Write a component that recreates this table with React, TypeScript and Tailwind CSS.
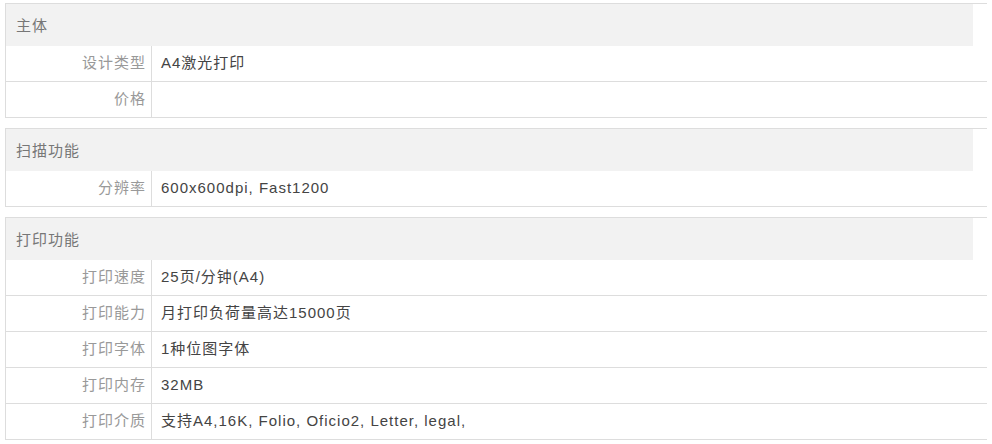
const sections: { title: string; rows: [string, string][] }[] = [
  {
    title: "主体",
    rows: [
      ["设计类型", "A4激光打印"],
      ["价格", ""],
    ],
  },
  {
    title: "扫描功能",
    rows: [["分辨率", "600x600dpi, Fast1200"]],
  },
  {
    title: "打印功能",
    rows: [
      ["打印速度", "25页/分钟(A4)"],
      ["打印能力", "月打印负荷量高达15000页"],
      ["打印字体", "1种位图字体"],
      ["打印内存", "32MB"],
      ["打印介质", "支持A4,16K, Folio, Oficio2, Letter, legal,"],
    ],
  },
];

export default function App() {
  return (
    <div
      className="w-[992px] h-[444px] overflow-hidden bg-white pl-[5px] pt-[3px] flex flex-col gap-[10px] text-[15px] tracking-[1px]"
      style={{ fontFamily: '"Liberation Sans", Arial, "Noto Sans CJK SC", sans-serif' }}
    >
      {sections.map((s) => (
        <div key={s.title} className="w-[982px] border-l border-t border-[#dddddd] shrink-0">
          {/* header */}
          <div className="h-[42px] w-[967px] bg-[#f2f2f2] pl-[10px] pt-[2px] flex items-center text-[#777777]">
            {s.title}
          </div>
          {s.rows.map(([label, value]) => (
            <div key={label} className="h-[36px] flex border-b border-[#dddddd]">
              <div className="w-[146px] shrink-0 border-r border-[#dddddd] pr-[5px] flex items-center justify-end text-[#999999]">
                {label}
              </div>
              <div className="pl-[9px] flex items-center text-[#444444]">{value}</div>
            </div>
          ))}
        </div>
      ))}
    </div>
  );
}
